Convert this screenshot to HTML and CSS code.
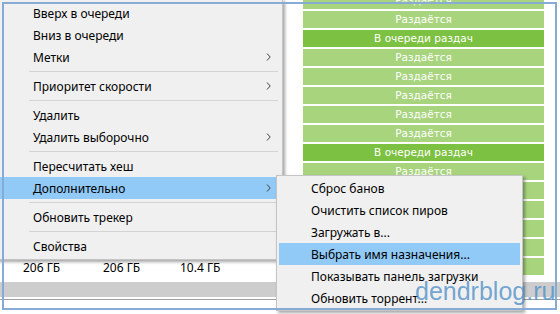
FILE: index.html
```html
<!DOCTYPE html>
<html lang="ru">
<head>
    <meta charset="UTF-8">
    <meta name="viewport" content="width=device-width, initial-scale=1.0">
    <title>Контекстное меню торрента</title>
    <link rel="stylesheet" href="styles.css">
</head>
<body>
    <div class="screen">
        <!-- список торрентов под меню -->
        <div class="list">
            <div class="row"><div class="cells"></div><div class="status">Раздаётся</div></div>
            <div class="row"><div class="cells"></div><div class="status">Раздаётся</div></div>
            <div class="row"><div class="cells"></div><div class="status queued">В очереди раздач</div></div>
            <div class="row"><div class="cells"></div><div class="status">Раздаётся</div></div>
            <div class="row"><div class="cells"></div><div class="status">Раздаётся</div></div>
            <div class="row"><div class="cells"></div><div class="status">Раздаётся</div></div>
            <div class="row"><div class="cells"></div><div class="status">Раздаётся</div></div>
            <div class="row"><div class="cells"></div><div class="status">Раздаётся</div></div>
            <div class="row"><div class="cells"></div><div class="status queued">В очереди раздач</div></div>
            <div class="row"><div class="cells"></div><div class="status">Раздаётся</div></div>
            <div class="row"><div class="cells"></div><div class="status">Раздаётся</div></div>
            <div class="row"><div class="cells"></div><div class="status">Раздаётся</div></div>
            <div class="row"><div class="cells"></div><div class="status">Раздаётся</div></div>
            <div class="row"><div class="cells"></div><div class="status">Раздаётся</div></div>
            <div class="row"><div class="cells"><span>206 ГБ</span><span class="narrow">206 ГБ</span><span>10.4 ГБ</span></div><div class="status">Раздаётся</div></div>
        </div>
        <div class="hscroll"></div>
        <div class="bottom-line"></div>

        <!-- главное контекстное меню -->
        <ul class="menu main-menu">
            <li class="item">Вверх в очереди</li>
            <li class="item">Вниз в очереди</li>
            <li class="item">Метки<svg class="arrow" width="5" height="8" viewBox="0 0 5 8"><path d="M1 0.5l3.2 3.5-3.2 3.5" fill="none" stroke="#404040" stroke-width="1"/></svg></li>
            <li class="sep"></li>
            <li class="item">Приоритет скорости<svg class="arrow" width="5" height="8" viewBox="0 0 5 8"><path d="M1 0.5l3.2 3.5-3.2 3.5" fill="none" stroke="#404040" stroke-width="1"/></svg></li>
            <li class="sep"></li>
            <li class="item">Удалить</li>
            <li class="item">Удалить выборочно<svg class="arrow" width="5" height="8" viewBox="0 0 5 8"><path d="M1 0.5l3.2 3.5-3.2 3.5" fill="none" stroke="#404040" stroke-width="1"/></svg></li>
            <li class="sep"></li>
            <li class="item">Пересчитать хеш</li>
            <li class="item hover">Дополнительно<svg class="arrow" width="5" height="8" viewBox="0 0 5 8"><path d="M1 0.5l3.2 3.5-3.2 3.5" fill="none" stroke="#404040" stroke-width="1"/></svg></li>
            <li class="sep"></li>
            <li class="item">Обновить трекер</li>
            <li class="sep"></li>
            <li class="item">Свойства</li>
        </ul>

        <!-- подменю "Дополнительно" -->
        <ul class="menu sub-menu">
            <li class="item">Сброс банов</li>
            <li class="item">Очистить список пиров</li>
            <li class="item">Загружать в...</li>
            <li class="item hover">Выбрать имя назначения...</li>
            <li class="item">Показывать панель загрузки</li>
            <li class="item">Обновить торрент...</li>
        </ul>

        <div class="frame"></div>
        <div class="mark">dendrblog.ru</div>
    </div>
</body>
</html>
```

FILE: styles.css
```css
*{
    margin: 0;
    padding: 0;
    box-sizing: border-box;
}
body{
    width: 560px;
    height: 314px;
    overflow: hidden;
    background-color: #fff;
    font-family: "Noto Sans", "Liberation Sans", sans-serif;
    font-size: 12px;
    color: #000;
}
.screen{
    position: relative;
    width: 560px;
    height: 314px;
    overflow: hidden;
}

/* список */
.list{
    margin-top: -8px;
}
.row{
    display: flex;
    height: 19px;
}
.cells{
    width: 303px;
    height: 19px;
    display: flex;
    align-items: center;
    padding-left: 23px;
}
.cells span{
    width: 80px;
}
.cells .narrow{
    width: 77px;
}
.status{
    width: 241px;
    height: 17px;
    line-height: 17px;
    background-color: #a8d47e;
    color: #fff;
    text-align: center;
    font-family: "DejaVu Sans", sans-serif;
    font-size: 10.5px;
}
.status.queued{
    background-color: #7dc142;
}
.hscroll{
    height: 15px;
    margin-top: 5px;
    background-color: #cdcdcd;
}
.bottom-line{
    height: 1px;
    margin-top: 2px;
    background-color: #a0a0a0;
}

/* меню */
.menu{
    position: absolute;
    list-style: none;
    background-color: #f0f0f0;
    border: 1px solid #c4c4c4;
    box-shadow: 2px 2px 3px rgba(0, 0, 0, .35);
}
.menu .item{
    display: flex;
    align-items: center;
    height: 22px;
    white-space: nowrap;
}
.menu .hover{
    background-color: #91c9f7;
}
.menu .arrow{
    margin-left: auto;
}
.main-menu{
    left: -4px;
    top: -1px;
    width: 287px;
    padding: 2px 0;
}
.main-menu .item{
    margin: 0 6px 0 3px;
    padding: 0 5px 0 33px;
}
.main-menu .sep{
    height: 1px;
    margin: 3px 4px 3px 32px;
    background-color: #d4d4d4;
}
.sub-menu{
    left: 276px;
    top: 175px;
    width: 247px;
    padding: 1px 0;
}
.sub-menu .item{
    margin: 0 2px;
    padding-left: 32px;
}

/* рамка и подпись поверх */
.frame{
    position: absolute;
    left: 2px;
    top: 2px;
    width: 555px;
    height: 308px;
    border: 2px solid #88abd6;
}
.mark{
    position: absolute;
    left: 415px;
    top: 279px;
    font-family: "Liberation Sans", sans-serif;
    font-size: 25px;
    line-height: 25px;
    color: rgba(80, 145, 200, .8);
}
```
